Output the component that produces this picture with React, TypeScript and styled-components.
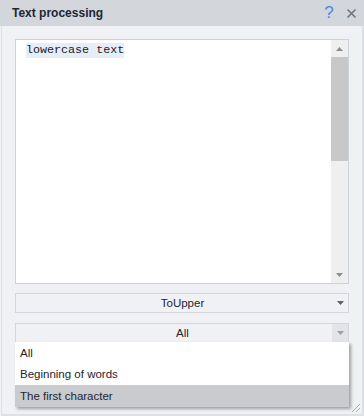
import React from "react";
import styled, { createGlobalStyle } from "styled-components";

const GlobalStyle = createGlobalStyle`
  html, body {
    margin: 0;
    padding: 0;
    background: #eff1f5;
  }
  * {
    box-sizing: border-box;
  }
`;

const Window = styled.div`
  width: 364px;
  height: 416px;
  display: flex;
  flex-direction: column;
  background: #eff1f5;
  font-family: "Liberation Sans", Arial, sans-serif;
  font-size: 11px;
  color: #1e2430;
  position: relative;
  overflow: hidden;
`;

const TitleBar = styled.div`
  height: 26px;
  flex: none;
  display: flex;
  align-items: center;
  padding: 0 2px 0 12px;
  background: #d3d6db;
`;

const Title = styled.div`
  flex: 1;
  font-weight: bold;
  font-size: 12px;
  color: #1c2638;
`;

const TitleButton = styled.div<{ $color: string }>`
  width: 22px;
  display: flex;
  justify-content: center;
  align-items: center;
  color: ${(p) => p.$color};
`;

const Body = styled.div`
  flex: 1;
  display: flex;
  flex-direction: column;
  padding: 13px 13px 0 13px;
  border-left: 1px solid #dde0e6;
  border-right: 2px solid #dde0e6;
  border-bottom: 2px solid #dde0e6;
  margin-left: 1px;
  position: relative;
`;

const Editor = styled.div`
  height: 245px;
  display: flex;
  background: #ffffff;
  border: 1px solid #cdd1d8;
`;

const EditorText = styled.div`
  flex: 1;
  padding: 3px 0 0 10px;
`;

const Selected = styled.span`
  font-family: "Liberation Mono", "Courier New", monospace;
  font-size: 11.7px;
  background: #e5eef8;
  color: #202020;
  line-height: 15px;
  display: inline-block;
`;

const ScrollBar = styled.div`
  width: 17px;
  display: flex;
  flex-direction: column;
  background: #efefef;
`;

const ScrollArrow = styled.div`
  height: 17px;
  display: flex;
  justify-content: center;
  align-items: center;
`;

const Thumb = styled.div`
  height: 104px;
  background: #c8c8c8;
`;

const Track = styled.div`
  flex: 1;
`;

const Combo = styled.div<{ $open?: boolean }>`
  height: 20px;
  display: flex;
  border: 1px solid #d2d5db;
  background: #eff1f5;
  margin-top: ${(p) => (p.$open ? "10px" : "9px")};
`;

const ComboText = styled.div`
  flex: 1;
  display: flex;
  justify-content: center;
  align-items: center;
  padding-left: 17px;
  font-size: 11.5px;
  color: #1e2430;
`;

const ComboButton = styled.div<{ $open?: boolean }>`
  width: 16px;
  display: flex;
  justify-content: center;
  align-items: center;
  background: ${(p) => (p.$open ? "#e2e4e8" : "transparent")};
`;

const DropList = styled.div`
  position: absolute;
  left: 13px;
  top: 316px;
  width: 334px;
  background: #ffffff;
  box-shadow: 2px 2px 3px rgba(0, 0, 0, 0.35);
  display: flex;
  flex-direction: column;
`;

const DropItem = styled.div<{ $active?: boolean }>`
  height: 21.5px;
  display: flex;
  align-items: center;
  padding-left: 5px;
  font-size: 11.5px;
  color: #1e2430;
  background: ${(p) => (p.$active ? "#c9cbcf" : "transparent")};
`;

const Grip = styled.svg`
  position: absolute;
  right: 1px;
  bottom: 1px;
`;

const Triangle = ({ up, color = "#8a8d93" }: { up?: boolean; color?: string }) => (
  <svg width="7" height="4" viewBox="0 0 7 4">
    <path d={up ? "M0 4 L3.5 0 L7 4 Z" : "M0 0 L7 0 L3.5 4 Z"} fill={color} />
  </svg>
);

const App = () => {
  return (
    <>
      <GlobalStyle />
      <Window>
        <TitleBar>
          <Title>Text processing</Title>
          <TitleButton $color="#4a86e8">
            <span style={{ fontSize: 17, fontFamily: "Liberation Sans, sans-serif" }}>?</span>
          </TitleButton>
          <TitleButton $color="#707780">
            <svg width="11" height="11" viewBox="0 0 11 11">
              <path d="M1.5 1.5 L9.5 9.5 M9.5 1.5 L1.5 9.5" stroke="#6f767f" strokeWidth="1.6" />
            </svg>
          </TitleButton>
        </TitleBar>
        <Body>
          <Editor>
            <EditorText>
              <Selected>lowercase text</Selected>
            </EditorText>
            <ScrollBar>
              <ScrollArrow>
                <Triangle up />
              </ScrollArrow>
              <Thumb />
              <Track />
              <ScrollArrow>
                <Triangle />
              </ScrollArrow>
            </ScrollBar>
          </Editor>
          <Combo>
            <ComboText>ToUpper</ComboText>
            <ComboButton>
              <Triangle color="#5c6068" />
            </ComboButton>
          </Combo>
          <Combo $open>
            <ComboText>All</ComboText>
            <ComboButton $open>
              <Triangle color="#9a9ea5" />
            </ComboButton>
          </Combo>
          <DropList>
            <DropItem>All</DropItem>
            <DropItem>Beginning of words</DropItem>
            <DropItem $active>The first character</DropItem>
          </DropList>
          <Grip width="12" height="12" viewBox="0 0 12 12">
            <path d="M11 3 L3 11 M11 7 L7 11" stroke="#a9adb4" strokeWidth="1" />
          </Grip>
        </Body>
      </Window>
    </>
  );
};

export default App;
